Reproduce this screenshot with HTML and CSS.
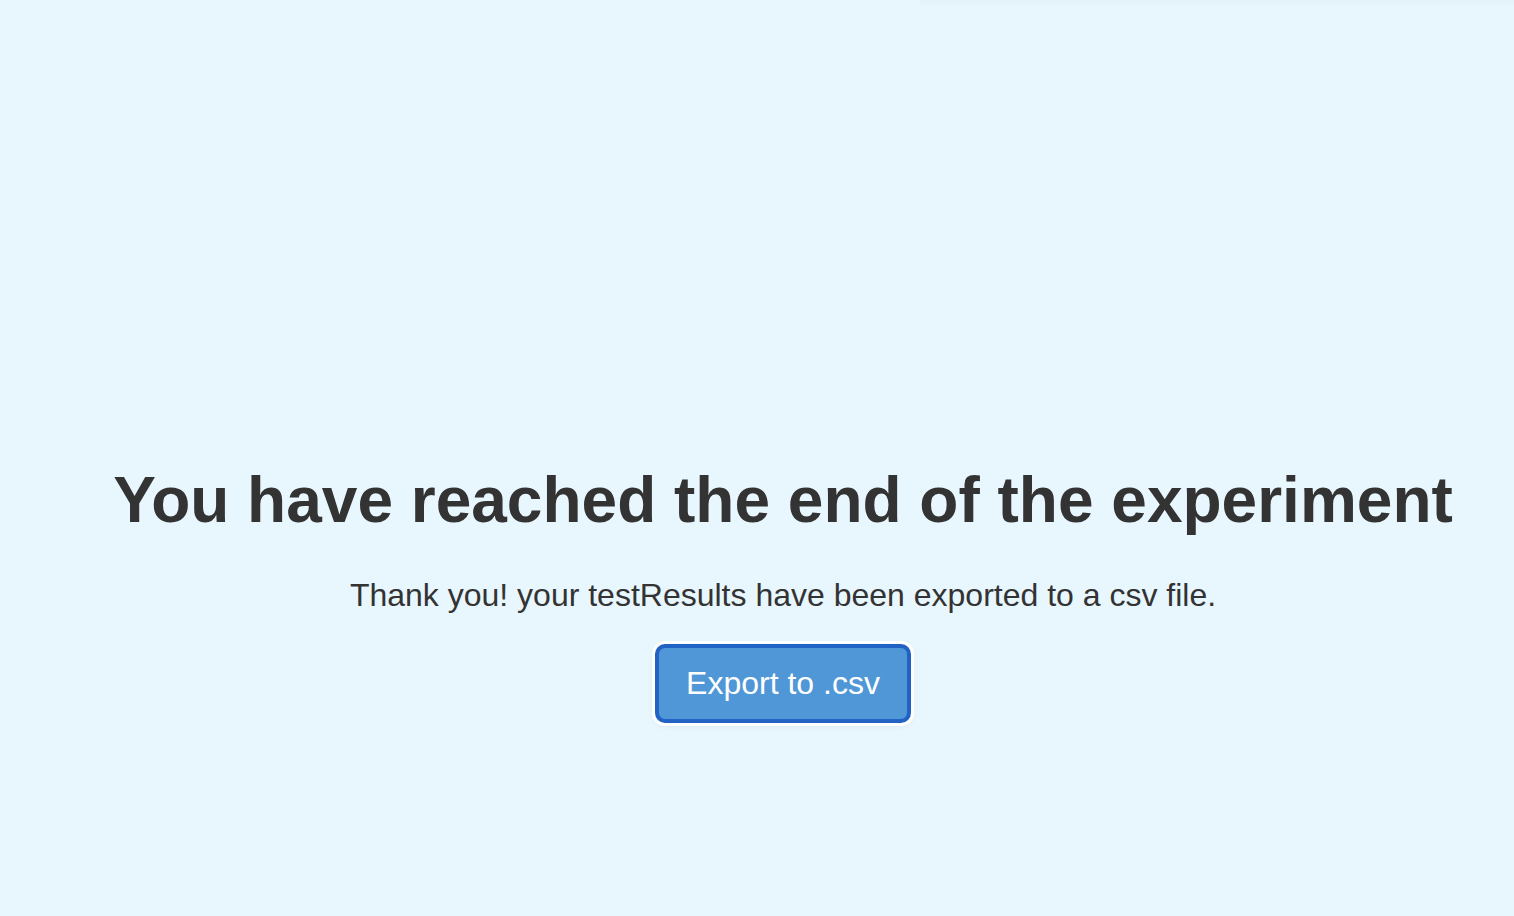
FILE: index.html
```html
<!DOCTYPE html>
<html>
<head>
<meta charset="utf-8">
<link rel="stylesheet" href="styles.css">
</head>
<body>
<div class="topbar"></div>
<main class="end">
  <h1 class="end-title">You have reached the end of the experiment</h1>
  <p class="end-text">Thank you! your testResults have been exported to a csv file.</p>
  <button class="export-btn">Export to .csv</button>
</main>
</body>
</html>
```

FILE: styles.css
```css
html, body {
  margin: 0;
  padding: 0;
  background: #e8f6fe;
  font-family: "Liberation Sans", Arial, sans-serif;
  color: #333333;
}
body {
  height: 916px;
  overflow: hidden;
  position: relative;
}
.topbar {
  position: absolute;
  top: 0;
  left: 920px;
  right: 0;
  height: 8px;
  background: linear-gradient(#e3f1f8, #e8f6fe);
}
.end {
  display: flex;
  flex-direction: column;
  align-items: center;
  padding-top: 462px;
  padding-left: 52px;
}
.end-title {
  margin: 0;
  font-size: 64px;
  font-weight: bold;
  line-height: 76px;
}
.end-text {
  margin: 38px 0 0 0;
  font-size: 32px;
  line-height: 38px;
}
.export-btn {
  margin-top: 30px;
  width: 256px;
  height: 79px;
  background: #4f97d6;
  color: #ffffff;
  border: 4px solid #2162c4;
  border-radius: 10px;
  box-shadow: 0 0 0 3px #ffffff, 0 2px 8px rgba(0,0,0,0.08);
  font-family: "Liberation Sans", Arial, sans-serif;
  font-size: 32px;
  padding: 0;
}
```
